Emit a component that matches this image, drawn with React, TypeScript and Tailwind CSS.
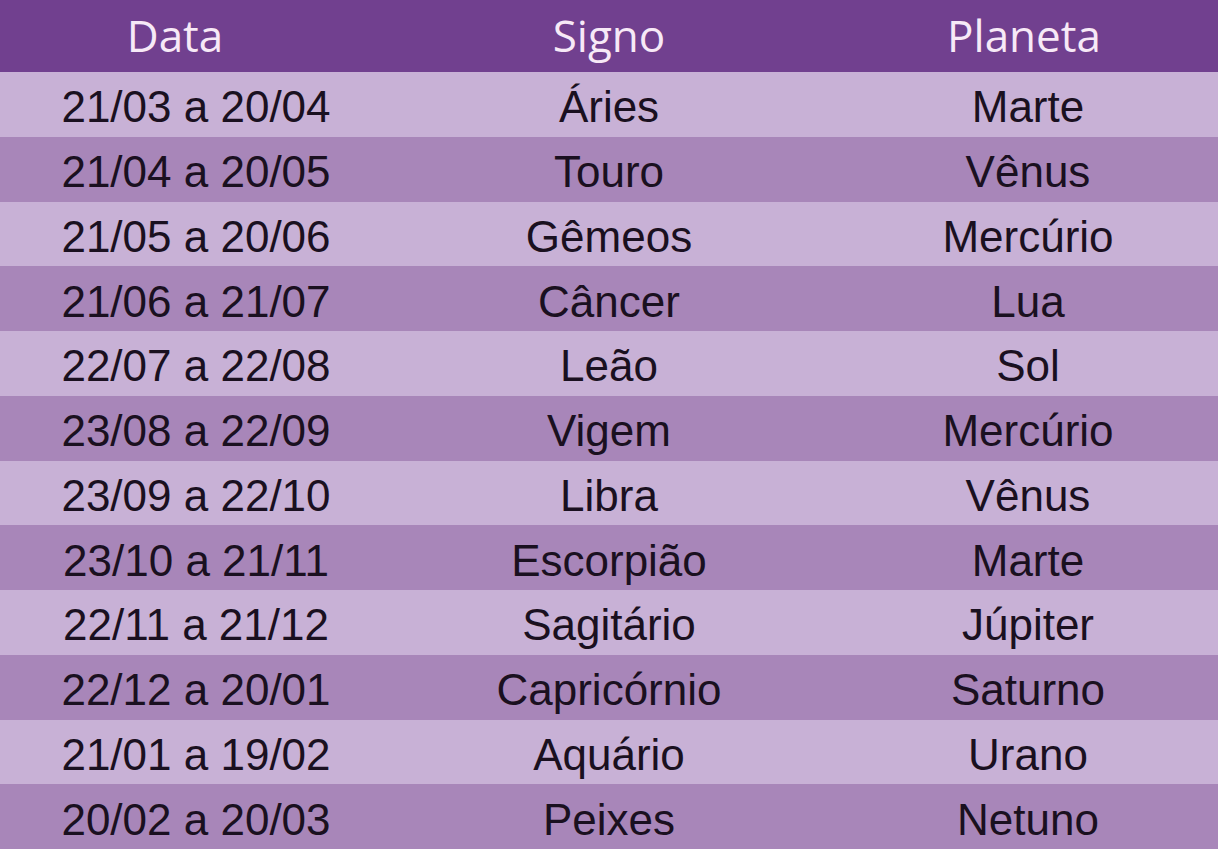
const rows: [string, string, string][] = [
  ["21/03 a 20/04", "Áries", "Marte"],
  ["21/04 a 20/05", "Touro", "Vênus"],
  ["21/05 a 20/06", "Gêmeos", "Mercúrio"],
  ["21/06 a 21/07", "Câncer", "Lua"],
  ["22/07 a 22/08", "Leão", "Sol"],
  ["23/08 a 22/09", "Vigem", "Mercúrio"],
  ["23/09 a 22/10", "Libra", "Vênus"],
  ["23/10 a 21/11", "Escorpião", "Marte"],
  ["22/11 a 21/12", "Sagitário", "Júpiter"],
  ["22/12 a 20/01", "Capricórnio", "Saturno"],
  ["21/01 a 19/02", "Aquário", "Urano"],
  ["20/02 a 20/03", "Peixes", "Netuno"],
];

export default function App() {
  return (
    <div className="w-[1218px] h-[849px] flex flex-col overflow-hidden">
      <div className="h-[72px] shrink-0 bg-[#71408f] grid grid-cols-[392px_434px_392px] items-center text-[44px] text-[#f7e9f7] font-['Open_Sans',sans-serif] leading-none">
        <div className="text-center pr-[42px] pb-[2px]">Data</div>
        <div className="text-center pb-[2px]">Signo</div>
        <div className="text-center pl-[4px] pb-[2px]">Planeta</div>
      </div>
      <div className="flex-1 grid grid-rows-[repeat(12,1fr)]">
        {rows.map(([data, signo, planeta], i) => (
          <div
            key={data}
            className={`grid grid-cols-[392px_434px_392px] items-center text-[44px] leading-none text-[#1a1020] font-['Liberation_Sans',Arial,sans-serif] ${i % 2 === 0 ? "bg-[#c8b1d6]" : "bg-[#a886b9]"}`}
          >
            <div className="text-center pt-[6px]">{data}</div>
            <div className="text-center pt-[6px]">{signo}</div>
            <div className="text-center pl-[12px] pt-[6px]">{planeta}</div>
          </div>
        ))}
      </div>
    </div>
  );
}
